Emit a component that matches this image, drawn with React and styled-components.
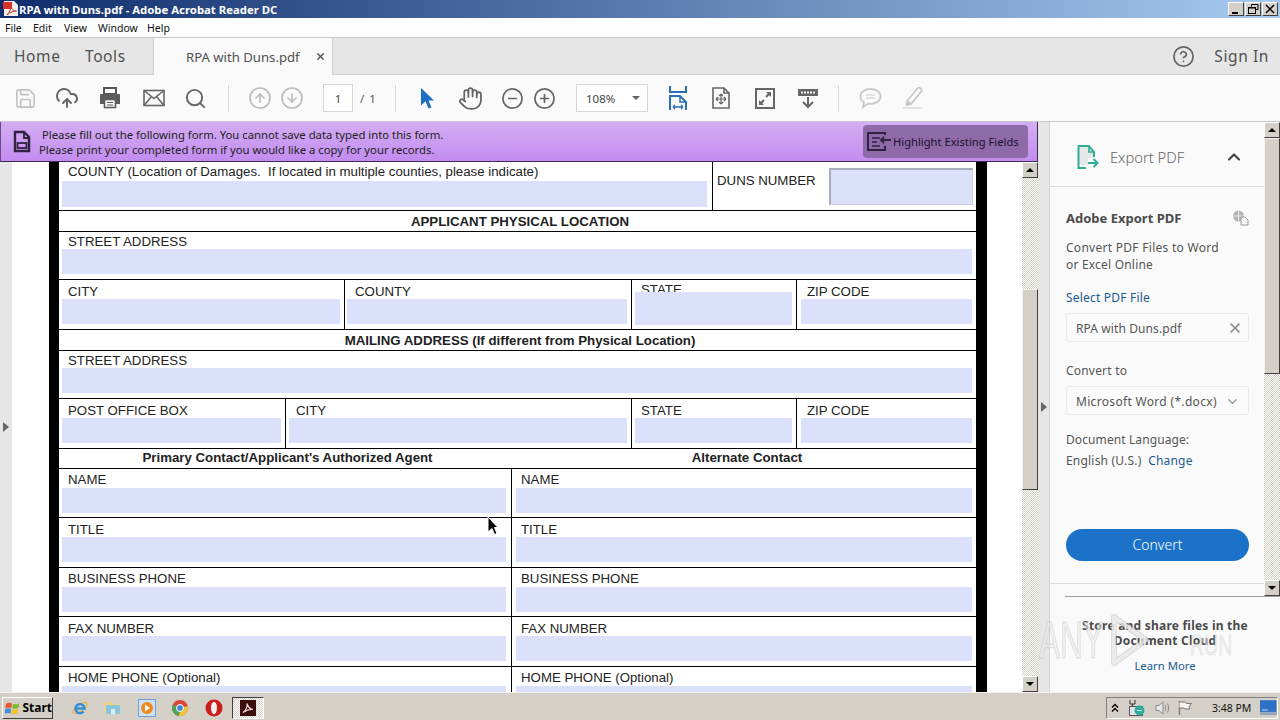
import styled, { createGlobalStyle } from "styled-components";
import {
  Save, CloudUpload, Search, CircleArrowUp, CircleArrowDown, Hand, CircleMinus, CirclePlus,
  CircleHelp, ChevronUp, ChevronDown, X,
} from "lucide-react";

const Global = createGlobalStyle`
  html, body { margin: 0; padding: 0; overflow: hidden; }
  body { width: 1280px; height: 720px; font-family: "Noto Sans", sans-serif; }
  * { box-sizing: border-box; }
`;

const checker = "repeating-conic-gradient(#d4d0c8 0 25%, #ffffff 0 50%) 0 0 / 2px 2px";

const formRows = [
  { h: 21, head: [{ w: 917, lh: 22, pl: 5, text: "APPLICANT PHYSICAL LOCATION" }] },
  { h: 48, top: 1, cells: [{ w: 917, label: "STREET ADDRESS", end: true }] },
  {
    h: 50, top: 3, cells: [
      { w: 286, label: "CITY" },
      { w: 287, label: "COUNTY", pl: 10, ml: 2 },
      { w: 165, label: "STATE", pl: 9, tall: true },
      { w: 179, label: "ZIP CODE", pl: 10, ml: 4, end: true },
    ],
  },
  { h: 21, head: [{ w: 917, lh: 22, pl: 5, text: "MAILING ADDRESS (If different from Physical Location)" }] },
  { h: 48, top: 1, cells: [{ w: 917, label: "STREET ADDRESS", end: true }] },
  {
    h: 50, top: 3, cells: [
      { w: 227, label: "POST OFFICE BOX" },
      { w: 346, label: "CITY", pl: 10, ml: 3 },
      { w: 165, label: "STATE", pl: 9 },
      { w: 179, label: "ZIP CODE", pl: 10, ml: 4, end: true },
    ],
  },
  {
    h: 20, head: [
      { w: 453, lh: 17, pl: 4, text: "Primary Contact/Applicant's Authorized Agent" },
      { w: 464, lh: 17, pl: 6, text: "Alternate Contact" },
    ],
  },
  { h: 49, top: 2, gap: 1, pair: "NAME" },
  { h: 50, top: 3, pair: "TITLE" },
  { h: 49, top: 2, gap: 1, pair: "BUSINESS PHONE" },
  { h: 50, top: 3, pair: "FAX NUMBER" },
  { h: 50, top: 2, gap: 1, pair: "HOME PHONE (Optional)" },
];

const Screen = styled.div`
  width: 1280px;
  height: 720px;
  display: flex;
  flex-direction: column;
  position: relative;
  overflow: hidden;
  background: #fafafa;
`;

const TitleBar = styled.div`
  height: 18px;
  flex: none;
  display: flex;
  align-items: center;
  padding: 0 2px 0 3px;
  background: linear-gradient(90deg, #0f2c6c 0%, #a6caf0 100%);
`;

const TitleText = styled.span`
  margin-left: 0;
  flex: 1;
  color: #fff;
  font: 700 11.35px "Noto Sans", sans-serif;
`;

const WinButton = styled.div`
  width: 16px;
  height: 14px;
  margin-left: 1px;
  background: #d4d0c8;
  border: 1px solid;
  border-color: #fff #404040 #404040 #fff;
  display: flex;
  align-items: center;
  justify-content: center;
`;

const MenuBar = styled.div`
  height: 20px;
  flex: none;
  display: flex;
  align-items: center;
  background: #fdfdfd;
  border-bottom: 1px solid #c8c8c8;
  font-size: 10.5px;
  color: #111;
`;

const MenuItem = styled.span`
  width: ${(p) => p.$w}px;
  padding-left: 5px;
`;

const TabBar = styled.div`
  height: 37px;
  flex: none;
  display: flex;
  background: #e6e6e6;
  border-bottom: 1px solid #cfcfcf;
`;

const NavLink = styled.span`
  width: ${(p) => p.$w}px;
  padding-left: 14px;
  line-height: 36px;
  font-size: 15.5px;
  letter-spacing: 0.6px;
  color: #505050;
`;

const DocTab = styled.div`
  width: 180px;
  height: 37px;
  display: flex;
  align-items: center;
  padding-left: 32px;
  margin-left: 2px;
  background: #fafafa;
  border-left: 1px solid #cfcfcf;
  border-right: 1px solid #cfcfcf;
  font-size: 13.15px;
  color: #505050;
`;

const TabClose = styled.span`
  margin-left: 15px;
  display: flex;
  color: #555;
`;

const TabRight = styled.div`
  margin-left: auto;
  display: flex;
  align-items: center;
  padding-right: 11px;
  gap: 19px;
  height: 36px;
  color: #666;
`;

const SignIn = styled.span`
  font-size: 15.5px;
  letter-spacing: 0.6px;
  color: #505050;
`;

const Toolbar = styled.div`
  height: 47px;
  flex: none;
  display: flex;
  align-items: center;
  padding-left: 4px;
  background: #fafafa;
  border-bottom: 1px solid #c9c9c9;
`;

const ToolSlot = styled.div`
  width: ${(p) => p.$w || 43}px;
  display: flex;
  justify-content: center;
  align-items: center;
  color: ${(p) => p.$color || "#666"};
`;

const ToolSep = styled.div`
  width: 1px;
  height: 27px;
  background: #d8d8d8;
  margin: 0 ${(p) => p.$r ?? 10}px 0 ${(p) => p.$l ?? 10}px;
`;

const PageBox = styled.div`
  width: 30px;
  height: 28px;
  border: 1px solid #d6d6d6;
  background: #fff;
  display: flex;
  align-items: center;
  justify-content: center;
  font-size: 11.5px;
  color: #444;
`;

const PageTotal = styled.span`
  width: 42px;
  padding-left: 7px;
  font-size: 11.5px;
  color: #555;
  word-spacing: 2px;
`;

const ZoomBox = styled.div`
  width: 72px;
  height: 28px;
  margin: 0 8px 0 11px;
  border: 1px solid #d6d6d6;
  background: #fff;
  display: flex;
  align-items: center;
  justify-content: space-between;
  padding: 0 7px 0 9px;
  font-size: 11.5px;
  color: #444;
`;

const Caret = styled.span`
  width: 0;
  height: 0;
  border-left: 4px solid transparent;
  border-right: 4px solid transparent;
  border-top: 4px solid #666;
`;

const Main = styled.div`
  flex: 1;
  display: flex;
  min-height: 0;
`;

const LeftColumn = styled.div`
  width: 1038px;
  display: flex;
  flex-direction: column;
`;

const Notice = styled.div`
  height: 40px;
  flex: none;
  display: flex;
  align-items: center;
  padding-left: 12px;
  background: linear-gradient(180deg, #d4adf2 0%, #c28cf0 100%);
  border-bottom: 1px solid #3a2a55;
  border-right: 1px solid #3a2a55;
  border-left: 1px solid #6a4a8a;
`;

const NoticeText = styled.div`
  width: 824px;
  margin-left: 8px;
  font-size: 11.3px;
  line-height: 15px;
  color: #222;
  white-space: nowrap;
`;

const NoticeLine = styled.div`
  margin-left: ${(p) => p.$ml || 0}px;
`;

const HighlightButton = styled.div`
  width: 165px;
  height: 33px;
  display: flex;
  align-items: center;
  gap: 2px;
  padding-left: 4px;
  border-radius: 4px;
  background: #8e6ba8;
  font-size: 11.2px;
  color: #1c0f2e;
  white-space: nowrap;
`;

const DocRow = styled.div`
  flex: 1;
  display: flex;
  min-height: 0;
`;

const Strip = styled.div`
  width: 12px;
  flex: none;
  background: #e6e6e6;
  display: flex;
  align-items: center;
  padding-left: 3px;
`;

const Arrow = styled.span`
  width: 0;
  height: 0;
  border-top: 5px solid transparent;
  border-bottom: 5px solid transparent;
  border-left: 6px solid #666;
`;

const Canvas = styled.div`
  width: 1010px;
  padding-left: 37px;
  background: #fff;
  overflow: hidden;
`;

const Page = styled.div`
  width: 938px;
  height: 100%;
  border-left: 10px solid #000;
  border-right: 11px solid #000;
  background: #fff;
  overflow: hidden;
  font-family: "Liberation Sans", Arial, sans-serif;
  font-size: 13.25px;
  color: #222;
`;

const Row = styled.div`
  height: ${(p) => p.$h}px;
  display: flex;
  flex: none;
  border-bottom: 1px solid #000;
`;

const Cell = styled.div`
  width: ${(p) => p.$w}px;
  flex: none;
  padding-top: ${(p) => p.$top || 0}px;
  border-right: ${(p) => (p.$end ? "none" : "1px solid #000")};
`;

const Label = styled.div`
  height: 16px;
  line-height: 18px;
  padding-left: ${(p) => p.$pl ?? 9}px;
  margin-top: ${(p) => p.$mt || 0}px;
  white-space: pre;
`;

const Field = styled.div`
  height: ${(p) => p.$h || 25}px;
  margin: ${(p) => p.$gap || 0}px ${(p) => p.$mr ?? 4}px 0 ${(p) => p.$ml ?? 3}px;
  background: #dbe0fb;
`;

const TallField = styled(Field)`
  position: relative;
  height: 33px;
  margin-top: -5px;
`;

const Heading = styled.div`
  width: ${(p) => p.$w}px;
  padding-left: ${(p) => p.$pl || 0}px;
  text-align: center;
  font-weight: 700;
  line-height: ${(p) => p.$lh}px;
`;

const DunsCell = styled.div`
  flex: 1;
  display: flex;
  align-items: flex-start;
  padding: 6px 3px 0 4px;
`;

const DunsLabel = styled.div`
  width: 112px;
  line-height: 25px;
`;

const DunsField = styled.div`
  width: 144px;
  height: 37px;
  background: #dbe0fb;
  border: 1px solid;
  border-width: 2px 1px 1px 2px;
  border-color: #a9acbd #c9cde6 #c9cde6 #a9acbd;
`;

const ScrollBar = styled.div`
  width: 16px;
  flex: none;
  display: flex;
  flex-direction: column;
  background: ${checker};
`;

const ScrollButton = styled.div`
  height: 16px;
  flex: none;
  background: #d4d0c8;
  border: 1px solid;
  border-color: #fff #404040 #404040 #fff;
  display: flex;
  align-items: center;
  justify-content: center;
`;

const ScrollGlyph = styled.span`
  width: 0;
  height: 0;
  border-left: 4px solid transparent;
  border-right: 4px solid transparent;
  border-${(p) => (p.$down ? "top" : "bottom")}: 4px solid #000;
`;

const ScrollThumb = styled.div`
  height: ${(p) => p.$h}px;
  margin-top: ${(p) => p.$mt}px;
  flex: none;
  background: #d4d0c8;
  border: 1px solid;
  border-color: #f4f2ee #404040 #404040 #f4f2ee;
`;

const ScrollFill = styled.div`
  flex: 1;
`;

const Splitter = styled.div`
  width: 12px;
  flex: none;
  background: #e6e6e6;
  border-right: 1px solid #d4d4d4;
  display: flex;
  align-items: center;
  padding-left: 3px;
`;

const Panel = styled.div`
  width: 230px;
  flex: none;
  display: flex;
  flex-direction: column;
  background: #fafafa;
`;

const PanelTop = styled.div`
  height: 474px;
  flex: none;
  display: flex;
`;

const PanelBody = styled.div`
  width: 214px;
  display: flex;
  flex-direction: column;
`;

const PanelHeader = styled.div`
  height: 65px;
  flex: none;
  display: flex;
  align-items: center;
  padding: 6px 0 0 27px;
  border-bottom: 1px solid #dedede;
`;

const PanelHeaderText = styled.span`
  margin-left: 11px;
  width: 114px;
  font-size: 14.7px;
  font-weight: 300;
  color: #666;
`;

const PanelForm = styled.div`
  flex: 1;
  padding: 0 15px 0 16px;
  font-size: 12px;
  color: #555;
`;

const FormTitle = styled.div`
  margin-top: 22px;
  height: 18px;
  display: flex;
  align-items: center;
  justify-content: space-between;
  font-size: 13px;
  font-weight: 700;
  color: #4b4b4b;
`;

const TextLine = styled.div`
  margin-top: ${(p) => p.$mt || 0}px;
  line-height: 17px;
  letter-spacing: ${(p) => p.$ls ?? 0.2}px;
  white-space: nowrap;
`;

const BlueText = styled.span`
  color: #1a5a8f;
`;

const InputBox = styled.div`
  margin-top: 7px;
  height: 29px;
  display: flex;
  align-items: center;
  justify-content: space-between;
  padding: 1px ${(p) => p.$pr ?? 5}px 0 9px;
  border: 1px solid #ebebeb;
  border-radius: 3px;
  background: #fbfbfb;
  white-space: nowrap;
  letter-spacing: ${(p) => p.$ls ?? 0.1}px;
`;

const ConvertButton = styled.div`
  margin-top: 60px;
  height: 32px;
  padding-bottom: 2px;
  border-radius: 16px;
  background: #1b72c8;
  color: #fff;
  font-size: 14px;
  font-weight: 300;
  display: flex;
  align-items: center;
  justify-content: center;
`;

const PanelRule = styled.div`
  height: 1px;
  flex: none;
  margin-bottom: 12px;
  background: #dcdcdc;
`;

const CloudBox = styled.div`
  flex: 1;
  margin-left: 15px;
  padding: 21px 15px 0 0;
  border-top: 1px solid #a0a0a0;
  text-align: center;
  font-size: 12px;
  line-height: 15px;
  color: #4b4b4b;
`;

const CloudTitle = styled.div`
  font-weight: 700;
  letter-spacing: 0.22px;
  white-space: nowrap;
`;

const LearnMore = styled.div`
  margin-top: 10px;
  font-size: 11.3px;
  color: #1a5a8f;
`;

const Taskbar = styled.div`
  height: 28px;
  flex: none;
  display: flex;
  align-items: center;
  padding: 2px 2px 0;
  background: #d4d0c8;
  border-top: 1px solid #f4f2ee;
`;

const StartButton = styled.div`
  width: 51px;
  height: 22px;
  display: flex;
  align-items: center;
  gap: 2px;
  padding-left: 2px;
  background: #d4d0c8;
  border: 1px solid;
  border-color: #fff #404040 #404040 #fff;
  font: 700 12px "Noto Sans", sans-serif;
  color: #000;
`;

const TaskIcon = styled.div`
  width: ${(p) => p.$w || 33.5}px;
  display: flex;
  justify-content: center;
  align-items: center;
`;

const ActiveTask = styled.div`
  width: 32px;
  height: 22px;
  margin-left: 1px;
  display: flex;
  justify-content: center;
  align-items: center;
  background: ${checker};
  border: 1px solid;
  border-color: #404040 #fff #fff #404040;
`;

const Tray = styled.div`
  margin-left: auto;
  width: 172px;
  height: 22px;
  display: flex;
  align-items: center;
  padding-left: 3px;
  border: 1px solid;
  border-color: #808080 #fff #fff #808080;
  font-size: 10.5px;
  color: #111;
`;

const TrayClock = styled.span`
  margin-left: 12px;
  width: 50px;
  white-space: nowrap;
`;

const Watermark = styled.div`
  position: absolute;
  left: 1039px;
  top: 612px;
  width: 200px;
  height: 56px;
  display: flex;
  align-items: center;
  pointer-events: none;
  color: rgba(236, 236, 236, 0.62);
  font: 400 50px "Liberation Sans", sans-serif;
  -webkit-text-stroke: 1px rgba(170, 170, 170, 0.4);
`;

const WatermarkWord = styled.span`
  display: inline-block;
  flex: none;
  width: ${(p) => p.$w}px;
  margin-left: ${(p) => p.$ml || 0}px;
  margin-top: ${(p) => p.$mt || 0}px;
  transform: scale(${(p) => p.$sx}, ${(p) => p.$sy});
  transform-origin: left center;
`;

const WatermarkPlay = styled.svg`
  flex: none;
`;

const Pointer = styled.svg`
  position: absolute;
  left: 487px;
  top: 516px;
`;

const PrinterIcon = () => (
  <svg width="22" height="22" viewBox="0 0 22 22">
    <rect x="5" y="1" width="12" height="6" fill="none" stroke="#555" strokeWidth="2" />
    <path d="M2 7h18a1 1 0 0 1 1 1v9h-4v-3H5v3H1V8a1 1 0 0 1 1-1z" fill="#5c5c5c" />
    <rect x="5.5" y="12.5" width="11" height="8" fill="#fafafa" stroke="#5c5c5c" strokeWidth="1.6" />
    <path d="M8 15.5h6M8 18h6" stroke="#5c5c5c" />
  </svg>
);

const MailIcon = () => (
  <svg width="22" height="18" viewBox="0 0 22 18" fill="none" stroke="#666" strokeWidth="1.6">
    <rect x="1" y="1.5" width="20" height="15" />
    <path d="M1 1.5l10 8 10-8M1 16.5l7.5-9M21 16.5l-7.5-9" />
  </svg>
);

const SelectIcon = () => (
  <svg width="16" height="22" viewBox="0 0 16 22">
    <path d="M2 1l13 12.5H9.5l3 7-3 1-3-7.200L2 18.500z" fill="#1b6ec2" />
  </svg>
);

const FitWidthIcon = () => (
  <svg width="18" height="25" viewBox="0 0 18 25" fill="none" stroke="#2b6fb8" strokeWidth="2">
    <path d="M1 0v6h16V0" />
    <path d="M1 24V10h10l6 6v8" />
    <path d="M11 10v6h6" strokeWidth="1.5" />
    <path d="M4 21h10M4 21l2-2M4 21l2 2M14 21l-2-2M14 21l-2 2" strokeWidth="1.3" />
  </svg>
);

const FitPageIcon = () => (
  <svg width="18" height="22" viewBox="0 0 18 22" fill="none" stroke="#666" strokeWidth="1.6">
    <path d="M1 1h11l5 5v15H1z" />
    <path d="M12 1v5h5" />
    <path d="M9 7v10M4 12h10M9 7L7 9M9 7l2 2M9 17l-2-2M9 17l2-2M4 12l2-2M4 12l2 2M14 12l-2-2M14 12l-2 2" strokeWidth="1.2" />
  </svg>
);

const FullIcon = () => (
  <svg width="20" height="21" viewBox="0 0 20 21">
    <rect x="1" y="1" width="18" height="19" fill="none" stroke="#666" strokeWidth="2" />
    <path d="M11 4h5v5zM9 17H4v-5z" fill="#666" />
    <path d="M14 6l-3 3M6 15l3-3" stroke="#666" strokeWidth="2" />
  </svg>
);

const ReadIcon = () => (
  <svg width="22" height="22" viewBox="0 0 22 22" fill="none" stroke="#666">
    <rect x="1" y="2" width="20" height="7" fill="#666" stroke="none" />
    <path d="M4 5.500h14" stroke="#fafafa" strokeWidth="2" strokeDasharray="2 1" />
    <path d="M11 10v10M6 15l5 5 5-5" strokeWidth="2" />
  </svg>
);

const CommentIcon = () => (
  <svg width="23" height="22" viewBox="0 0 23 22" fill="none" stroke="#c8c8c8" strokeWidth="1.8">
    <path d="M11.500 2C6 2 1.500 5 1.500 9.500c0 2.500 1.200 4.500 3.500 5.800L4 20l5-3.300c.8.100 1.600.2 2.500.2 5.500 0 10-3 10-7.400S17 2 11.500 2z" />
    <path d="M7 8h9M7 11h9" strokeWidth="1.200" />
  </svg>
);

const HighlightIcon = () => (
  <svg width="24" height="24" viewBox="0 0 24 24" fill="none">
    <path d="M7 15L18 2c1.500-1 4 1 3.500 3L11 18z" stroke="#c6c6c6" strokeWidth="1.700" />
    <path d="M7 15l4 3-3 2-3-1z" fill="#c6c6c6" />
    <path d="M3 22h19" stroke="#e2e2e2" strokeWidth="2" />
  </svg>
);

const FormDocIcon = () => (
  <svg width="18" height="23" viewBox="0 0 18 23" fill="none" stroke="#2f2340" strokeWidth="2.400">
    <path d="M2 2h9l5 5v14H2z" />
    <path d="M11 2v6h5" strokeWidth="1.800" />
    <rect x="4.500" y="13" width="9" height="5" strokeWidth="1.800" />
  </svg>
);

const HighlightFieldsIcon = () => (
  <svg width="24" height="20" viewBox="0 0 24 20" fill="none" stroke="#2f2340" strokeWidth="2">
    <path d="M18 3V1H1v17h17v-4" />
    <path d="M5 6h8M5 10h5M5 14h8" strokeWidth="1.500" />
    <path d="M24 8H14M17 5l-3 3 3 3" strokeWidth="1.800" />
  </svg>
);

const ExportIcon = () => (
  <svg width="22" height="24" viewBox="0 0 22 24" fill="none">
    <path d="M2 1h10l5 5v7h-6v7H2z" fill="#e4e9e8" />
    <path d="M9 23H1.500V1H12l5 6v5" stroke="#2fae94" strokeWidth="2" />
    <path d="M12 1v6h5" stroke="#2fae94" strokeWidth="1.600" />
    <path d="M11 18h9M16.500 14l4 4-4 4" stroke="#2fae94" strokeWidth="2" />
  </svg>
);

const CloudFileIcon = () => (
  <svg width="17" height="16" viewBox="0 0 17 16" fill="none">
    <circle cx="6.500" cy="6" r="5.500" fill="#b5b5b5" />
    <path d="M1 6h11M6.500 .5v11" stroke="#e8e8e8" />
    <path d="M9 7h4l3 3v5H9z" fill="#fafafa" stroke="#9a9a9a" />
  </svg>
);

const AcrobatMini = () => (
  <svg width="16" height="16" viewBox="0 0 16 16">
    <path d="M1 0h10l4 4v11H1z" fill="#f3f0ee" />
    <rect x="0" y="1" width="9" height="7" fill="#d8312a" />
    <path d="M4 14c3-3 4-7 3.500-9 1 3 3 5 6 5-3 0-6 1-9.500 4z" fill="none" stroke="#d8312a" />
  </svg>
);

const FlagIcon = () => (
  <svg width="16" height="16" viewBox="0 0 16 16">
    <path d="M1 3.500C3 2 5 2.500 7.300 3.300l-.8 4.700C4.300 7.300 2.300 7 .4 8z" fill="#e7572d" />
    <path d="M8.200 3.500c2 .8 4 1 6.500-.3L14 8c-2.500 1-4.500 1-6.600.4z" fill="#7cbb2f" />
    <path d="M.3 9c2-1 4-.7 6 0L5.600 13.700C3.800 13 2 12.800 0 13.700z" fill="#3c8fe0" />
    <path d="M7.200 9.300c2 .6 4 .6 6.600-.4l-.8 4.700c-2.500 1-4.500 1-6.500.4z" fill="#f5c22c" />
  </svg>
);

const IeIcon = () => (
  <svg width="18" height="18" viewBox="0 0 18 18" fill="none">
    <ellipse cx="9" cy="9" rx="8" ry="3.500" transform="rotate(-35 9 9)" stroke="#e8b53c" strokeWidth="1.300" />
    <path d="M4.500 9.500h9a4.500 4.500 0 1 0-1 3" stroke="#2e8fd8" strokeWidth="2.400" />
  </svg>
);

const FolderIcon = () => (
  <svg width="18" height="17" viewBox="0 0 18 17">
    <path d="M1 3h6l2 2h7v10H1z" fill="#f0d27a" />
    <rect x="2" y="6" width="14" height="9" fill="#8cc4dc" />
    <rect x="7" y="10" width="4" height="5" fill="#d8eef5" />
  </svg>
);

const MediaIcon = () => (
  <svg width="18" height="18" viewBox="0 0 18 18">
    <rect x=".5" y=".5" width="17" height="17" fill="#cfe0f2" stroke="#6f9fd0" />
    <circle cx="9" cy="9" r="6" fill="#ec8a1c" />
    <path d="M7 5.500l5 3.500-5 3.500z" fill="#fff" />
  </svg>
);

const ChromeIcon = () => (
  <svg width="16" height="16" viewBox="0 0 16 16">
    <circle cx="8" cy="8" r="8" fill="#d8473a" />
    <path d="M8 8L1 4.500A8 8 0 0 0 7 16z" fill="#4aa457" />
    <path d="M8 8l7.700-2A8 8 0 0 1 7 16z" fill="#eec53a" />
    <circle cx="8" cy="8" r="3.500" fill="#4a86d8" stroke="#fff" />
  </svg>
);

const OperaIcon = () => (
  <svg width="18" height="18" viewBox="0 0 18 18">
    <circle cx="9" cy="9" r="8.500" fill="#cc1b1b" />
    <ellipse cx="9" cy="9" rx="3" ry="6.200" fill="#f4f0ee" />
  </svg>
);

const AcrobatIcon = () => (
  <svg width="16" height="16" viewBox="0 0 16 16">
    <rect width="16" height="16" fill="#3c0c0c" />
    <path d="M3 12.500c3-2 4.500-6 4-9 .8 3 3 5.500 6 6-3-.3-7 .8-10 3z" fill="none" stroke="#f0d8d8" strokeWidth="1.200" />
  </svg>
);

const NetworkIcon = () => (
  <svg width="18" height="18" viewBox="0 0 18 18">
    <path d="M2 1v4h5V1M4.500 5v3" stroke="#333" fill="none" />
    <rect x="1.500" y="7.500" width="13" height="9" fill="#dfe5e8" stroke="#556" />
    <circle cx="11.500" cy="11.500" r="5" fill="#2fae9c" />
    <path d="M9 11.500h5" stroke="#dff" />
  </svg>
);

const VolumeIcon = () => (
  <svg width="16" height="16" viewBox="0 0 16 16" fill="none" stroke="#8a8a8a">
    <path d="M1 5.500h3L8 2v12L4 10.500H1z" fill="#e8e8e8" />
    <path d="M10 5c1 2 1 4 0 6M12.500 3.500c1.500 3 1.500 6 0 9" />
  </svg>
);

const TrayFlagIcon = () => (
  <svg width="16" height="16" viewBox="0 0 16 16" fill="none" stroke="#777">
    <path d="M2.500 1v14" strokeWidth="1.400" />
    <path d="M2.500 2h6l1 1.500h5l-2.500 3 1 2.500H8L7 8H2.500" fill="#f4f4f0" />
  </svg>
);

const DesktopIcon = () => (
  <svg width="17" height="15" viewBox="0 0 17 15">
    <rect width="17" height="15" fill="#2f6fc4" />
    <rect y="12" width="17" height="3" fill="#9aa8b8" />
    <path d="M2 10h6" stroke="#cfe0f2" />
  </svg>
);

function FormCell({ cell, row }) {
  const FieldPart = cell.tall ? TallField : Field;
  return (
    <Cell $w={cell.w} $end={cell.end} $top={row.top}>
      <Label $pl={cell.pl} $mt={cell.tall ? -2 : 0}>{cell.label}</Label>
      <FieldPart $gap={row.gap} $ml={cell.ml} $mr={cell.mr} />
    </Cell>
  );
}

function FormRow({ row }) {
  if (row.head) {
    return (
      <Row $h={row.h}>
        {row.head.map((item) => (
          <Heading key={item.text} $w={item.w} $lh={item.lh} $pl={item.pl}>{item.text}</Heading>
        ))}
      </Row>
    );
  }
  const cells = row.pair
    ? [
        { w: 453, label: row.pair, mr: 5 },
        { w: 464, label: row.pair, ml: 4, end: true },
      ]
    : row.cells;
  return (
    <Row $h={row.h}>
      {cells.map((cell, i) => (
        <FormCell key={i} cell={cell} row={row} />
      ))}
    </Row>
  );
}

export default function App() {
  return (
    <Screen>
      <Global />
      <TitleBar>
        <AcrobatMini />
        <TitleText>RPA with Duns.pdf - Adobe Acrobat Reader DC</TitleText>
        <WinButton>
          <svg width="10" height="10"><path d="M1 8h6v2H1z" fill="#000" /></svg>
        </WinButton>
        <WinButton>
          <svg width="11" height="10" fill="none" stroke="#000"><path d="M3.500 2.500V.5h6.500v5H8" /><rect x=".5" y="3.500" width="7" height="6" /><path d="M1 4h6" /></svg>
        </WinButton>
        <WinButton>
          <svg width="10" height="10" stroke="#000" strokeWidth="1.500"><path d="M1 1l8 8M9 1l-8 8" /></svg>
        </WinButton>
      </TitleBar>

      <MenuBar>
        <MenuItem $w={28}>File</MenuItem>
        <MenuItem $w={31}>Edit</MenuItem>
        <MenuItem $w={34}>View</MenuItem>
        <MenuItem $w={49}>Window</MenuItem>
        <MenuItem $w={40}>Help</MenuItem>
      </MenuBar>

      <TabBar>
        <NavLink $w={71}>Home</NavLink>
        <NavLink $w={80}>Tools</NavLink>
        <DocTab>
          RPA with Duns.pdf
          <TabClose><X size={11} strokeWidth={3} /></TabClose>
        </DocTab>
        <TabRight>
          <CircleHelp size={23} strokeWidth={1.8} />
          <SignIn>Sign In</SignIn>
        </TabRight>
      </TabBar>

      <Toolbar>
        <ToolSlot $w={42} $color="#c2c2c2"><Save size={23} strokeWidth={1.7} /></ToolSlot>
        <ToolSlot $w={42}><CloudUpload size={24} strokeWidth={1.9} /></ToolSlot>
        <ToolSlot $w={44}><PrinterIcon /></ToolSlot>
        <ToolSlot $w={43}><MailIcon /></ToolSlot>
        <ToolSlot $w={41}><Search size={23} strokeWidth={2} /></ToolSlot>
        <ToolSep $l={12} $r={15} />
        <ToolSlot $w={32} $color="#bdbdbd"><CircleArrowUp size={24} strokeWidth={1.7} /></ToolSlot>
        <ToolSlot $w={32} $color="#bdbdbd"><CircleArrowDown size={24} strokeWidth={1.7} /></ToolSlot>
        <ToolSlot $w={15} />
        <PageBox>1</PageBox>
        <PageTotal>/ 1</PageTotal>
        <ToolSep $l={0} $r={10} />
        <ToolSlot $w={42}><SelectIcon /></ToolSlot>
        <ToolSlot $w={44}><Hand size={25} strokeWidth={1.7} /></ToolSlot>
        <ToolSlot $w={41}><CircleMinus size={23} strokeWidth={1.8} /></ToolSlot>
        <ToolSlot $w={23}><CirclePlus size={23} strokeWidth={1.8} /></ToolSlot>
        <ToolSlot $w={9} />
        <ZoomBox>108%<Caret /></ZoomBox>
        <ToolSlot $w={43}><FitWidthIcon /></ToolSlot>
        <ToolSlot $w={44}><FitPageIcon /></ToolSlot>
        <ToolSlot $w={43}><FullIcon /></ToolSlot>
        <ToolSlot $w={43}><ReadIcon /></ToolSlot>
        <ToolSep $l={9} $r={10} />
        <ToolSlot $w={42}><CommentIcon /></ToolSlot>
        <ToolSlot $w={42}><HighlightIcon /></ToolSlot>
      </Toolbar>

      <Main>
        <LeftColumn>
          <Notice>
            <FormDocIcon />
            <NoticeText>
              <NoticeLine $ml={3}>Please fill out the following form. You cannot save data typed into this form.</NoticeLine>
              <NoticeLine>Please print your completed form if you would like a copy for your records.</NoticeLine>
            </NoticeText>
            <HighlightButton>
              <HighlightFieldsIcon />
              Highlight Existing Fields
            </HighlightButton>
          </Notice>
          <DocRow>
            <Strip><Arrow /></Strip>
            <Canvas>
              <Page>
                <Row $h={49}>
                  <Cell $w={654} $top={1}>
                    <Label>{"COUNTY (Location of Damages.  If located in multiple counties, please indicate)"}</Label>
                    <Field $gap={2} $h={26} $mr={5} />
                  </Cell>
                  <DunsCell>
                    <DunsLabel>DUNS NUMBER</DunsLabel>
                    <DunsField />
                  </DunsCell>
                </Row>
                {formRows.map((row, i) => (
                  <FormRow key={i} row={row} />
                ))}
              </Page>
            </Canvas>
            <ScrollBar>
              <ScrollButton><ScrollGlyph /></ScrollButton>
              <ScrollThumb $mt={111} $h={201} />
              <ScrollFill />
              <ScrollButton><ScrollGlyph $down /></ScrollButton>
            </ScrollBar>
          </DocRow>
        </LeftColumn>

        <Splitter><Arrow /></Splitter>

        <Panel>
          <PanelTop>
            <PanelBody>
              <PanelHeader>
                <ExportIcon />
                <PanelHeaderText>Export PDF</PanelHeaderText>
                <ChevronUp size={20} strokeWidth={2.6} color="#444" />
              </PanelHeader>
              <PanelForm>
                <FormTitle>Adobe Export PDF <CloudFileIcon /></FormTitle>
                <TextLine $mt={12} $ls={0.28}>Convert PDF Files to Word</TextLine>
                <TextLine>or Excel Online</TextLine>
                <TextLine $mt={16}><BlueText>Select PDF File</BlueText></TextLine>
                <InputBox>RPA with Duns.pdf <X size={16} strokeWidth={2.4} color="#888" /></InputBox>
                <TextLine $mt={20}>Convert to</TextLine>
                <InputBox $ls={0.32} $pr={8}>Microsoft Word (*.docx) <ChevronDown size={15} strokeWidth={2} color="#888" /></InputBox>
                <TextLine $mt={16} $ls={0.1}>Document Language:</TextLine>
                <TextLine $mt={4}>English (U.S.) &nbsp;<BlueText>Change</BlueText></TextLine>
                <ConvertButton>Convert</ConvertButton>
              </PanelForm>
              <PanelRule />
            </PanelBody>
            <ScrollBar>
              <ScrollButton><ScrollGlyph /></ScrollButton>
              <ScrollThumb $mt={0} $h={236} />
              <ScrollFill />
              <ScrollButton><ScrollGlyph $down /></ScrollButton>
            </ScrollBar>
          </PanelTop>
          <CloudBox>
            <CloudTitle>Store and share files in the</CloudTitle>
            <CloudTitle>Document Cloud</CloudTitle>
            <LearnMore>Learn More</LearnMore>
          </CloudBox>
        </Panel>
      </Main>

      <Taskbar>
        <StartButton><FlagIcon />Start</StartButton>
        <TaskIcon $w={10} />
        <TaskIcon><IeIcon /></TaskIcon>
        <TaskIcon><FolderIcon /></TaskIcon>
        <TaskIcon><MediaIcon /></TaskIcon>
        <TaskIcon><ChromeIcon /></TaskIcon>
        <TaskIcon><OperaIcon /></TaskIcon>
        <ActiveTask><AcrobatIcon /></ActiveTask>
        <Tray>
          <svg width="10" height="10" fill="none" stroke="#000" strokeWidth="1.300"><path d="M2 4.500l3-3 3 3M2 8.500l3-3 3 3" /></svg>
          <TaskIcon $w={36}><NetworkIcon /></TaskIcon>
          <TaskIcon $w={16}><VolumeIcon /></TaskIcon>
          <TaskIcon $w={30}><TrayFlagIcon /></TaskIcon>
          <TrayClock>3:48 PM</TrayClock>
          <DesktopIcon />
        </Tray>
      </Taskbar>

      <Watermark>
        <WatermarkWord $w={71} $sx={0.63} $sy={1.05}>ANY</WatermarkWord>
        <WatermarkPlay width="40" height="56" viewBox="0 0 40 56" fill="none" strokeLinejoin="round">
          <path d="M4 5l32 23L4 51z" stroke="rgba(170,170,170,.4)" strokeWidth="6" />
          <path d="M4 5l32 23L4 51z" stroke="rgba(240,240,240,.75)" strokeWidth="4" />
        </WatermarkPlay>
        <WatermarkWord $w={42} $ml={40} $mt={10} $sx={0.39} $sy={0.6}>RUN</WatermarkWord>
      </Watermark>

      <Pointer width="12" height="20" viewBox="0 0 12 20">
        <path d="M1 1v15l4-3.500 2.500 6 2.500-1-2.500-6H11z" fill="#000" stroke="#fff" />
      </Pointer>
    </Screen>
  );
}
